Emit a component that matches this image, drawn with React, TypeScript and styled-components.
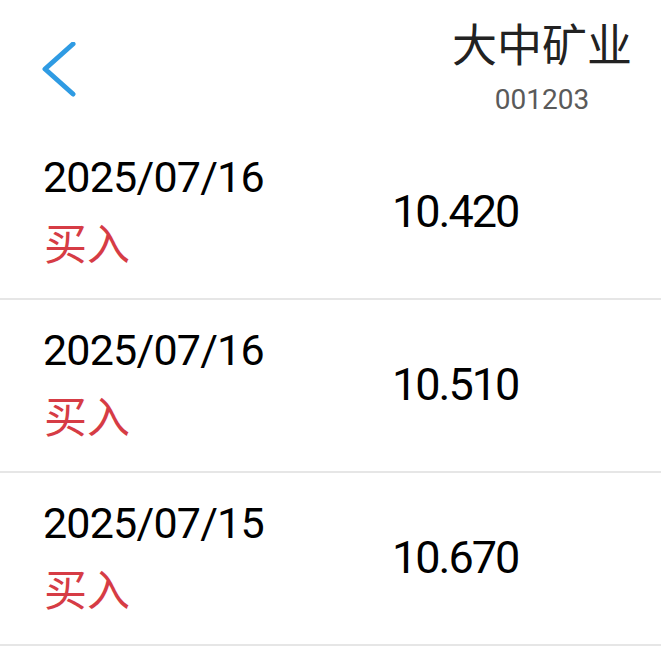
import React from "react"
import styled, { createGlobalStyle } from "styled-components"

const GlobalStyle = createGlobalStyle`
  body {
    margin: 0;
    background: #ffffff;
    font-family: Roboto, "Noto Sans CJK SC", sans-serif;
  }
`

type Trade = { date: string; side: string; price: string }

const trades: Trade[] = [
  { date: "2025/07/16", side: "买入", price: "10.420" },
  { date: "2025/07/16", side: "买入", price: "10.510" },
  { date: "2025/07/15", side: "买入", price: "10.670" },
]

const BackIcon = () => (
  <svg width="40" height="56" viewBox="0 0 40 56" fill="none">
    <path
      d="M33 2 L5 27 L33 52"
      stroke="#2f9be3"
      strokeWidth="5"
      strokeLinecap="round"
      strokeLinejoin="round"
    />
  </svg>
)

const App = () => {
  return (
    <Page>
      <GlobalStyle />
      <Header>
        <BackButton>
          <BackIcon />
        </BackButton>
        <StockInfo>
          <StockName>大中矿业</StockName>
          <StockCode>001203</StockCode>
        </StockInfo>
      </Header>
      <List>
        {trades.map((t, i) => (
          <Row key={i}>
            <Left>
              <DateText>{t.date}</DateText>
              <Side>{t.side}</Side>
            </Left>
            <Price>{t.price}</Price>
          </Row>
        ))}
      </List>
    </Page>
  )
}

export default App

const Page = styled.div`
  width: 661px;
  min-height: 648px;
  background: #ffffff;
`

const Header = styled.div`
  height: 127px;
  display: flex;
  justify-content: space-between;
  align-items: flex-start;
  padding: 0 29px 0 40px;
  box-sizing: border-box;
`

const BackButton = styled.div`
  margin-top: 42px;
  display: flex;
`

const StockInfo = styled.div`
  display: flex;
  flex-direction: column;
  align-items: center;
  margin-top: 20px;
`

const StockName = styled.div`
  font-family: "Noto Sans CJK SC", sans-serif;
  font-size: 45px;
  line-height: 45px;
  color: #222222;
`

const StockCode = styled.div`
  font-family: Roboto, sans-serif;
  font-size: 28px;
  line-height: 28px;
  color: #5a5a5a;
  margin-top: 21px;
`

const List = styled.div`
  display: flex;
  flex-direction: column;
`

const Row = styled.div`
  height: 171px;
  display: grid;
  grid-template-columns: 349px 1fr;
  padding-left: 43px;
  border-bottom: 2px solid #e6e6e6;
`

const Left = styled.div`
  display: flex;
  flex-direction: column;
  padding-top: 29px;
`

const DateText = styled.div`
  font-family: Roboto, sans-serif;
  font-size: 43px;
  line-height: 43px;
  letter-spacing: -0.8px;
  color: #000000;
`

const Side = styled.div`
  font-family: "Noto Sans CJK SC", sans-serif;
  font-size: 43px;
  line-height: 43px;
  color: #d63c45;
  margin-top: 21px;
  margin-left: 1px;
`

const Price = styled.div`
  align-self: center;
  font-family: Roboto, sans-serif;
  font-size: 45px;
  line-height: 45px;
  letter-spacing: -2px;
  color: #000000;
  margin-bottom: 3px;
`
